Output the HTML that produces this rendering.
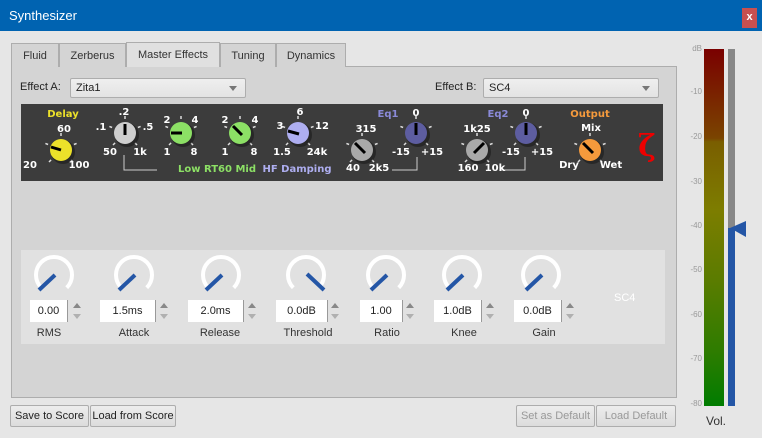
<!DOCTYPE html>
<html><head><meta charset="utf-8"><style>
*{box-sizing:border-box;margin:0;padding:0}
body{width:762px;height:438px;overflow:hidden;background:#e6e6e6;font-family:"Liberation Sans",sans-serif;font-size:11px;color:#222;position:relative}
.abs{position:absolute;white-space:nowrap}
.title{left:0;top:0;width:762px;height:31px;background:#0063b1;color:#fff;font-size:13px;line-height:31px;padding-left:9px}
.close{left:742px;top:8px;width:15px;height:20px;background:#c75050;color:#fff;font-size:11px;font-weight:bold;text-align:center;line-height:19px}
.tab{top:43px;height:24px;border:1px solid #adadad;border-bottom:none;background:#d4d4d4;text-align:center;line-height:24px;font-size:11px;color:#333}
.panel{left:11px;top:66px;width:666px;height:332px;background:#d4d4d4;border:1px solid #adadad}
.combo{height:20px;border:1px solid #adadad;border-radius:2px;background:linear-gradient(#efefef,#e3e3e3);padding-left:5px;line-height:18px}
.combo:after{content:"";position:absolute;right:8px;top:7px;border:4px solid transparent;border-top:5px solid #777}
.spin{width:38px;height:22px;background:#fff;border-right:1px solid #999;text-align:center;line-height:22px;font-size:11px}
.lbl{text-align:center;font-size:11px;color:#333;width:80px}
.btn{height:22px;border:1px solid #adadad;border-radius:2px;background:linear-gradient(#ededed,#dcdcdc);text-align:center;line-height:20px;font-size:11px}
.z{font-family:"DejaVu Sans",sans-serif;font-weight:bold;font-size:10px;fill:#fff}
</style></head><body>
<div class="abs title">Synthesizer</div>
<div class="abs close">x</div>

<div class="abs panel"></div>
<div class="abs tab" style="left:11px;width:48px">Fluid</div>
<div class="abs tab" style="left:59px;width:67px">Zerberus</div>
<div class="abs tab" style="left:126px;top:42px;height:25px;width:94px;background:#e0e0e0">Master Effects</div>
<div class="abs tab" style="left:220px;width:56px">Tuning</div>
<div class="abs tab" style="left:276px;width:70px">Dynamics</div>

<div class="abs" style="left:20px;top:81px">Effect A:</div>
<div class="abs combo" style="left:70px;top:78px;width:176px">Zita1</div>
<div class="abs" style="left:435px;top:81px">Effect B:</div>
<div class="abs combo" style="left:483px;top:78px;width:176px">SC4</div>

<svg class="abs" style="left:21px;top:104px" width="642" height="77" viewBox="21 104 642 77">
<defs>
<g id="t" stroke="#ddd" stroke-width="1.5"><line x1="-9.9" y1="9.9" x2="-12" y2="12"/><line x1="-12.9" y1="-5.5" x2="-15.6" y2="-6.6"/><line x1="0" y1="-14" x2="0" y2="-17"/><line x1="12.9" y1="-5.5" x2="15.6" y2="-6.6"/><line x1="9.9" y1="9.9" x2="12" y2="12"/></g>
</defs>
<rect x="21" y="104" width="642" height="77" fill="#3c3c3c"/>
<g stroke="#ccc" fill="none" stroke-width="1"><path d="M124 155V170H157"/><path d="M417 157V170H392"/><path d="M525 157V170H500"/></g>
<g transform="translate(61,150)"><use href="#t"/><circle r="12" fill="#111" opacity=".5" cx="2" cy="2"/><circle r="11" fill="#ece12a"/><line x1="0" y1="0" x2="-10" y2="-3" stroke="#000" stroke-width="3"/></g>
<g transform="translate(125,133)"><use href="#t"/><circle r="12" fill="#111" opacity=".5" cx="2" cy="2"/><circle r="11" fill="#cfcfcf"/><line x1="0" y1="2" x2="0" y2="-9" stroke="#000" stroke-width="3"/></g>
<g transform="translate(181,133)"><use href="#t"/><circle r="12" fill="#111" opacity=".5" cx="2" cy="2"/><circle r="11" fill="#8ce065"/><line x1="1" y1="0" x2="-10" y2="0" stroke="#000" stroke-width="3"/></g>
<g transform="translate(240,133)"><use href="#t"/><circle r="12" fill="#111" opacity=".5" cx="2" cy="2"/><circle r="11" fill="#8ce065"/><line x1="2" y1="2" x2="-7" y2="-7" stroke="#000" stroke-width="3"/></g>
<g transform="translate(298,133)"><use href="#t"/><circle r="12" fill="#111" opacity=".5" cx="2" cy="2"/><circle r="11" fill="#aeaef0"/><line x1="1" y1="1" x2="-10" y2="-2" stroke="#000" stroke-width="3"/></g>
<g transform="translate(362,150)"><use href="#t"/><circle r="12" fill="#111" opacity=".5" cx="2" cy="2"/><circle r="11" fill="#a9a9a9"/><line x1="3" y1="3" x2="-7" y2="-7" stroke="#000" stroke-width="3"/></g>
<g transform="translate(416,133)"><use href="#t"/><circle r="12" fill="#111" opacity=".5" cx="2" cy="2"/><circle r="11" fill="#5d5da0"/><line x1="0" y1="2" x2="0" y2="-10" stroke="#000" stroke-width="3"/></g>
<g transform="translate(477,150)"><use href="#t"/><circle r="12" fill="#111" opacity=".5" cx="2" cy="2"/><circle r="11" fill="#a9a9a9"/><line x1="-3" y1="3" x2="7" y2="-7" stroke="#000" stroke-width="3"/></g>
<g transform="translate(526,133)"><use href="#t"/><circle r="12" fill="#111" opacity=".5" cx="2" cy="2"/><circle r="11" fill="#5d5da0"/><line x1="0" y1="2" x2="0" y2="-10" stroke="#000" stroke-width="3"/></g>
<g transform="translate(590,150)"><use href="#t"/><circle r="12" fill="#111" opacity=".5" cx="2" cy="2"/><circle r="11" fill="#f59a3c"/><line x1="3" y1="3" x2="-7" y2="-7" stroke="#000" stroke-width="3"/></g>
<g class="z" text-anchor="middle">
<text x="63" y="117" style="fill:#ece12a">Delay</text>
<text x="64" y="132">60</text><text x="30" y="168">20</text><text x="79" y="168">100</text>
<text x="124" y="115">.2</text><text x="101" y="130">.1</text><text x="148" y="130">.5</text><text x="110" y="155">50</text><text x="140" y="155">1k</text>
<text x="167" y="123">2</text><text x="195" y="123">4</text><text x="167" y="155">1</text><text x="194" y="155">8</text>
<text x="225" y="123">2</text><text x="255" y="123">4</text><text x="225" y="155">1</text><text x="254" y="155">8</text>
<text x="300" y="115">6</text><text x="280" y="129">3</text><text x="322" y="129">12</text><text x="282" y="155">1.5</text><text x="317" y="155">24k</text>
<text x="217" y="172" style="fill:#8ce065">Low  RT60  Mid</text>
<text x="297" y="172" style="fill:#aeaef0">HF Damping</text>
<text x="388" y="117" style="fill:#8a8ad8">Eq1</text><text x="416" y="116">0</text>
<text x="366" y="132">315</text><text x="401" y="155">-15</text><text x="432" y="155">+15</text><text x="353" y="171">40</text><text x="379" y="171">2k5</text>
<text x="498" y="117" style="fill:#8a8ad8">Eq2</text><text x="526" y="116">0</text>
<text x="477" y="132">1k25</text><text x="511" y="155">-15</text><text x="542" y="155">+15</text><text x="468" y="171">160</text><text x="495" y="171">10k</text>
<text x="590" y="117" style="fill:#f59a3c">Output</text><text x="591" y="131">Mix</text>
<text x="569" y="168">Dry</text><text x="611" y="168">Wet</text>
</g>
<text x="647" y="156" text-anchor="middle" font-family="DejaVu Serif,serif" font-weight="bold" font-size="30" fill="#e00">ζ</text>
</svg>

<div class="abs" style="left:21px;top:250px;width:644px;height:94px;background:#e1e1e1"></div>
<svg class="abs" style="left:0;top:250px" width="680" height="80">
<g fill="none" stroke="#fff" stroke-width="4">
<path d="M41.3 37.7A18 18 0 1 1 66.7 37.7"/>
<path d="M121.3 37.7A18 18 0 1 1 146.7 37.7"/>
<path d="M208.3 37.7A18 18 0 1 1 233.7 37.7"/>
<path d="M293.3 37.7A18 18 0 1 1 318.7 37.7"/>
<path d="M373.3 37.7A18 18 0 1 1 398.7 37.7"/>
<path d="M449.3 37.7A18 18 0 1 1 474.7 37.7"/>
<path d="M528.3 37.7A18 18 0 1 1 553.7 37.7"/>
</g>
<g stroke="#2456a6" stroke-width="4">
<line x1="39" y1="40" x2="55" y2="25"/>
<line x1="119" y1="40" x2="135" y2="25"/>
<line x1="206" y1="40" x2="222" y2="25"/>
<line x1="324" y1="40" x2="307" y2="24"/>
<line x1="371" y1="40" x2="387" y2="25"/>
<line x1="447" y1="40" x2="463" y2="25"/>
<line x1="526" y1="40" x2="542" y2="25"/>
</g>
<g fill="#888">
<path d="M73 58l4-5 4 5z"/><path d="M73 64l4 5 4-5z" fill="#b0b0b0"/>
<path d="M160 58l4-5 4 5z"/><path d="M160 64l4 5 4-5z" fill="#b0b0b0"/>
<path d="M248 58l4-5 4 5z"/><path d="M248 64l4 5 4-5z" fill="#b0b0b0"/>
<path d="M331 58l4-5 4 5z"/><path d="M331 64l4 5 4-5z" fill="#b0b0b0"/>
<path d="M406 58l4-5 4 5z"/><path d="M406 64l4 5 4-5z" fill="#b0b0b0"/>
<path d="M486 58l4-5 4 5z"/><path d="M486 64l4 5 4-5z" fill="#b0b0b0"/>
<path d="M566 58l4-5 4 5z"/><path d="M566 64l4 5 4-5z" fill="#b0b0b0"/>
</g>
</svg>
<div class="abs spin" style="left:30px;top:300px">0.00</div>
<div class="abs spin" style="left:100px;top:300px;width:56px">1.5ms</div>
<div class="abs spin" style="left:188px;top:300px;width:56px">2.0ms</div>
<div class="abs spin" style="left:276px;top:300px;width:52px">0.0dB</div>
<div class="abs spin" style="left:360px;top:300px;width:43px">1.00</div>
<div class="abs spin" style="left:434px;top:300px;width:48px">1.0dB</div>
<div class="abs spin" style="left:514px;top:300px;width:48px">0.0dB</div>
<div class="abs lbl" style="left:9px;top:327px">RMS</div>
<div class="abs lbl" style="left:94px;top:327px">Attack</div>
<div class="abs lbl" style="left:180px;top:327px">Release</div>
<div class="abs lbl" style="left:268px;top:327px">Threshold</div>
<div class="abs lbl" style="left:347px;top:327px">Ratio</div>
<div class="abs lbl" style="left:424px;top:327px">Knee</div>
<div class="abs lbl" style="left:504px;top:327px">Gain</div>
<div class="abs" style="left:614px;top:292px;color:#fff;font-size:11px">SC4</div>

<div class="abs btn" style="left:10px;top:405px;width:79px">Save to Score</div>
<div class="abs btn" style="left:90px;top:405px;width:86px">Load from Score</div>
<div class="abs btn" style="left:516px;top:405px;width:79px;color:#999">Set as Default</div>
<div class="abs btn" style="left:596px;top:405px;width:80px;color:#999">Load Default</div>

<div class="abs" style="left:704px;top:49px;width:20px;height:357px;background:linear-gradient(#7a0000 0%,#7a4400 25%,#7a5e00 26%,#7d7d00 45%,#5a7c00 65%,#2d7c00 85%,#007c00 100%)"></div>
<div class="abs" style="left:728px;top:49px;width:7px;height:357px;background:#888"></div>
<div class="abs" style="left:728px;top:228px;width:7px;height:178px;background:#2456a6"></div>
<svg class="abs" style="left:728px;top:220px" width="20" height="18"><path d="M2 8L18 1V17Z" fill="#2456a6"/></svg>
<div class="abs" style="left:680px;top:43px;width:24px;font-size:8px;color:#999;text-align:right;line-height:12px">
<div style="position:absolute;right:2px;top:0">dB</div>
<div style="position:absolute;right:2px;top:43px">-10</div>
<div style="position:absolute;right:2px;top:88px">-20</div>
<div style="position:absolute;right:2px;top:133px">-30</div>
<div style="position:absolute;right:2px;top:177px">-40</div>
<div style="position:absolute;right:2px;top:221px">-50</div>
<div style="position:absolute;right:2px;top:266px">-60</div>
<div style="position:absolute;right:2px;top:310px">-70</div>
<div style="position:absolute;right:2px;top:355px">-80</div>
</div>
<div class="abs" style="left:706px;top:414px;font-size:12px;color:#333">Vol.</div>
</body></html>
